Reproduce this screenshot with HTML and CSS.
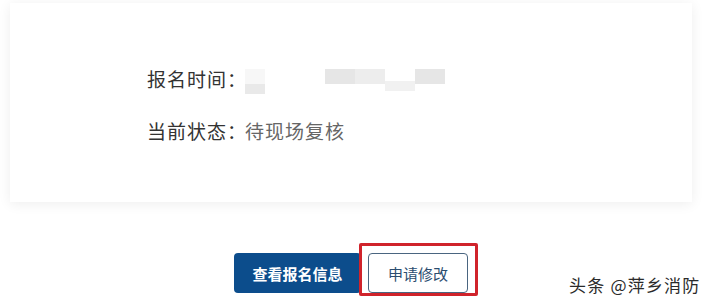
FILE: index.html
```html
<!DOCTYPE html>
<html lang="zh-CN">
<head>
<meta charset="utf-8">
<title>报名状态</title>
<link rel="stylesheet" href="styles.css">
</head>
<body>
<div class="page">
  <section class="card">
    <div class="row">
      <span class="label">报名时间：</span>
      <span class="blur">
        <span class="blk blk-a"><i class="p p-faint"></i><i class="p p-mid"></i></span>
        <span class="blk blk-b"><i class="p p-dark w30"></i><i class="p p-none w30"></i></span>
        <span class="blk blk-c"><i class="p p-light w30"></i><i class="p p-none w30"></i></span>
        <span class="blk blk-d"><i class="p p-none w30"></i><i class="p p-light2 w30"></i></span>
        <span class="blk blk-e"><i class="p p-dark w30"></i><i class="p p-none w30"></i></span>
      </span>
    </div>
    <div class="row">
      <span class="label">当前状态：</span>
      <span class="value">待现场复核</span>
    </div>
  </section>
  <div class="actions">
    <button class="btn btn-primary">查看报名信息</button>
    <div class="highlight">
      <button class="btn btn-outline">申请修改</button>
    </div>
  </div>
  <div class="watermark">头条 @萍乡消防</div>
</div>
</body>
</html>
```
FILE: styles.css
```css
html, body {
  margin: 0;
  padding: 0;
  background: #ffffff;
}
body {
  font-family: "Noto Sans CJK SC", "Noto Sans", sans-serif;
  width: 711px;
  height: 303px;
  overflow: hidden;
}
.page {
  position: relative;
  width: 711px;
  height: 303px;
  padding-top: 3px;
  box-sizing: border-box;
}
.card {
  margin: 0 19px 0 10px;
  height: 199px;
  background: #fff;
  box-shadow: 0 2px 12px rgba(0, 0, 0, 0.07);
  padding: 60px 0 0 137px;
  box-sizing: border-box;
}
.row {
  display: flex;
  align-items: center;
  height: 30px;
  font-size: 19px;
  color: #333;
  margin-bottom: 22px;
}
.label {
  letter-spacing: 1px;
  width: 98px;
  white-space: nowrap;
}
.value {
  color: #666;
  letter-spacing: 1px;
}
.blur {
  display: flex;
  align-items: flex-start;
  height: 30px;
}
.blk {
  display: flex;
  flex-direction: column;
  padding-top: 6px;
}
.p {
  display: block;
  width: 20px;
}
.p-faint { height: 15px; background: #f7f7f7; }
.p-mid { height: 10px; background: #e9e9e9; }
.p-dark { height: 15px; background: #e6e6e6; }
.p-light { height: 15px; background: #ededed; }
.p-light2 { height: 10px; background: #f1f1f1; margin-top: 2px; }
.p-none { height: 10px; }
.w30 { width: 30px; }
.blk-a { margin-right: 60px; }
.actions {
  display: flex;
  align-items: flex-start;
  margin-top: 51px;
  padding-left: 234px;
}
.btn {
  font-family: "Noto Sans CJK SC", "Noto Sans", sans-serif;
  height: 40px;
  border-radius: 4px;
  font-size: 15px;
  padding: 0;
  cursor: pointer;
}
.btn-primary {
  width: 127px;
  background: #0c4d8c;
  color: #fff;
  font-weight: 700;
  border: none;
}
.highlight {
  position: relative;
  margin-left: 7px;
}
.highlight::before {
  content: "";
  position: absolute;
  left: -9px;
  top: -10px;
  right: -10px;
  bottom: -3px;
  border: 3px solid #d0232b;
  border-radius: 2px;
  pointer-events: none;
}
.btn-outline {
  width: 100px;
  background: #fff;
  color: #2b4d70;
  border: 1px solid #4a6580;
}
.watermark {
  position: absolute;
  left: 569px;
  top: 272px;
  font-size: 17px;
  letter-spacing: 1.2px;
  color: #2a2a2a;
  white-space: nowrap;
}
```
